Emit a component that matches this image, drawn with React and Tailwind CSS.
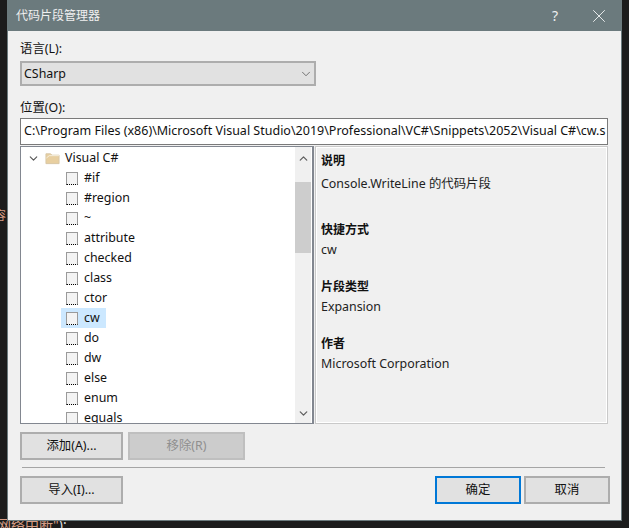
import { ChevronDown, ChevronUp, X } from "lucide-react";

const snippets = ["#if", "#region", "~", "attribute", "checked", "class", "ctor", "cw", "do", "dw", "else", "enum", "equals"];

const Button = ({ className = "", children }) => (
  <div className={`h-[28px] flex items-center justify-center border-2 text-[12.4px] ${className}`}>
    {children}
  </div>
);

const SnippetRow = ({ name, selected }) => (
  <div className="h-[20px] flex items-center pl-[40px] shrink-0">
    <div className={`flex items-center h-[20px] pl-[5px] pr-[6px] ${selected ? "bg-[#cce8ff]" : ""}`}>
      <span className="w-[12px] h-[13px] bg-[#f3f3f3] border border-[#9a9a9a] border-b-black [border-bottom-style:dotted]" />
      <span className="ml-[6px] text-[12.4px] text-[#111]">{name}</span>
    </div>
  </div>
);

const Info = ({ title, value, gap = "mt-[2px]", className = "" }) => (
  <div className={className}>
    <div className="font-bold text-[12px] leading-[18px] text-[#111]">{title}</div>
    <div className={`${gap} text-[12.4px] leading-[18px] text-[#222]`}>{value}</div>
  </div>
);

export default function App() {
  return (
    <div
      className="w-[629px] h-[528px] overflow-hidden bg-[#1c1c1c] relative"
      style={{ fontFamily: '"Noto Sans", "Noto Sans CJK SC", sans-serif' }}
    >
      {/* editor text showing around the dialog */}
      <div className="absolute left-0 top-[209px] w-[7px] h-[14px] overflow-hidden text-[12px] leading-[14px] text-[#d69d85]">
        <span className="ml-[-6px] block">容</span>
      </div>
      <div className="absolute left-[-3px] top-[516px] text-[14px] leading-[18px] whitespace-nowrap text-[#d69d85]">
        网络中断"<span className="text-[#dcdcdc]">);</span>
      </div>

      <div className="relative ml-[7px] w-[615px] h-[521px] border border-t-0 border-[#6b7a7d] bg-[#f0f0f0] flex flex-col">
        {/* title bar */}
        <div className="h-[31px] shrink-0 bg-[#6b7a7d] flex items-center text-white">
          <span className="ml-[8px] text-[12px] text-[#f0f0f0]">代码片段管理器</span>
          <span className="ml-auto text-[14px] mr-[30px] text-[#eef0f0]">?</span>
          <X size={22} strokeWidth={1} className="mr-[11px] text-[#f2f4f4]" />
        </div>

        <div className="flex-1 pl-[12px] pr-[11px] flex flex-col">
          <div className="mt-[9px] h-[18px] leading-[18px] text-[12.4px] text-[#111]">语言(L):</div>
          <div className="mt-[3px] w-[296px] h-[25px] border-2 border-[#adadad] bg-[#e1e1e1] flex items-center pl-[2px] pr-[1px] pt-[1px]">
            <span className="text-[12.4px] text-[#111]">CSharp</span>
            <ChevronDown size={14} strokeWidth={1.2} className="ml-auto text-[#444]" />
          </div>

          <div className="mt-[13px] h-[18px] leading-[18px] text-[12.4px] text-[#111]">位置(O):</div>
          <div className="mt-[1px] w-[588px] h-[27px] border border-[#7a7a7a] bg-white flex items-center pl-[3px] pb-[1px] overflow-hidden">
            <span className="text-[12.5px] text-[#111] whitespace-nowrap">
              C:\Program Files (x86)\Microsoft Visual Studio\2019\Professional\VC#\Snippets\2052\Visual C#\cw.s
            </span>
          </div>

          <div className="mt-[1px] flex w-[588px] h-[278px]">
            {/* snippet tree */}
            <div className="w-[294px] border border-[#828790] border-r-2 bg-white flex overflow-hidden">
              <div className="flex-1 flex flex-col overflow-hidden pt-[1px]">
                <div className="h-[20px] flex items-center shrink-0 pl-[6px]">
                  <ChevronDown size={13} strokeWidth={2} className="text-[#555]" />
                  <svg width="15" height="14" viewBox="0 0 16 14" className="ml-[5px]">
                    <path d="M1 2.5h5l1.5 1.5H15v9H1z" fill="#e8cfa0" stroke="#d8c6a6" />
                    <path d="M1.5 7l3-2.5H15" fill="none" stroke="#f6efe0" />
                  </svg>
                  <span className="ml-[5px] text-[12.4px] text-[#111]">Visual C#</span>
                </div>
                {snippets.map((s) => (
                  <SnippetRow key={s} name={s} selected={s === "cw"} />
                ))}
              </div>
              <div className="w-[16px] mr-[1px] bg-[#f0f0f0] flex flex-col items-center relative shrink-0">
                <ChevronUp size={13} strokeWidth={2.4} className="mt-[5px] text-[#606060]" />
                <div className="mt-[17px] w-full h-[71px] bg-[#cdcdcd]" />
                <ChevronDown size={13} strokeWidth={2.4} className="mt-auto mb-[3px] text-[#606060]" />
              </div>
            </div>

            {/* snippet details */}
            <div className="flex-1 ml-[1px] border border-[#c9c9c9]">
              <div className="h-full border border-white pl-[4px] pt-[4px]">
                <Info title="说明" value="Console.WriteLine 的代码片段" gap="mt-[5px]" />
                <Info title="快捷方式" value="cw" className="mt-[28px]" />
                <Info title="片段类型" value="Expansion" className="mt-[19px]" />
                <Info title="作者" value="Microsoft Corporation" className="mt-[19px]" />
              </div>
            </div>
          </div>

          <div className="mt-[8px] flex gap-[5px]">
            <Button className="w-[103px] bg-[#e1e1e1] border-[#adadad] text-[#111]">添加(A)...</Button>
            <Button className="w-[117px] bg-[#cccccc] border-[#bfbfbf] text-[#8f8f8f]">移除(R)</Button>
          </div>

          <div className="mt-[7px] ml-[2px] w-[583px] h-[1px] bg-[#a5a5a5] shrink-0" />

          <div className="mt-[8px] flex">
            <Button className="w-[103px] bg-[#e1e1e1] border-[#adadad] text-[#111]">导入(I)...</Button>
            <Button className="w-[86px] ml-auto bg-[#e1e1e1] border-[#0078d7] text-[#111]">确定</Button>
            <Button className="w-[86px] ml-[3px] bg-[#e1e1e1] border-[#adadad] text-[#111]">取消</Button>
          </div>
        </div>
      </div>
    </div>
  );
}
